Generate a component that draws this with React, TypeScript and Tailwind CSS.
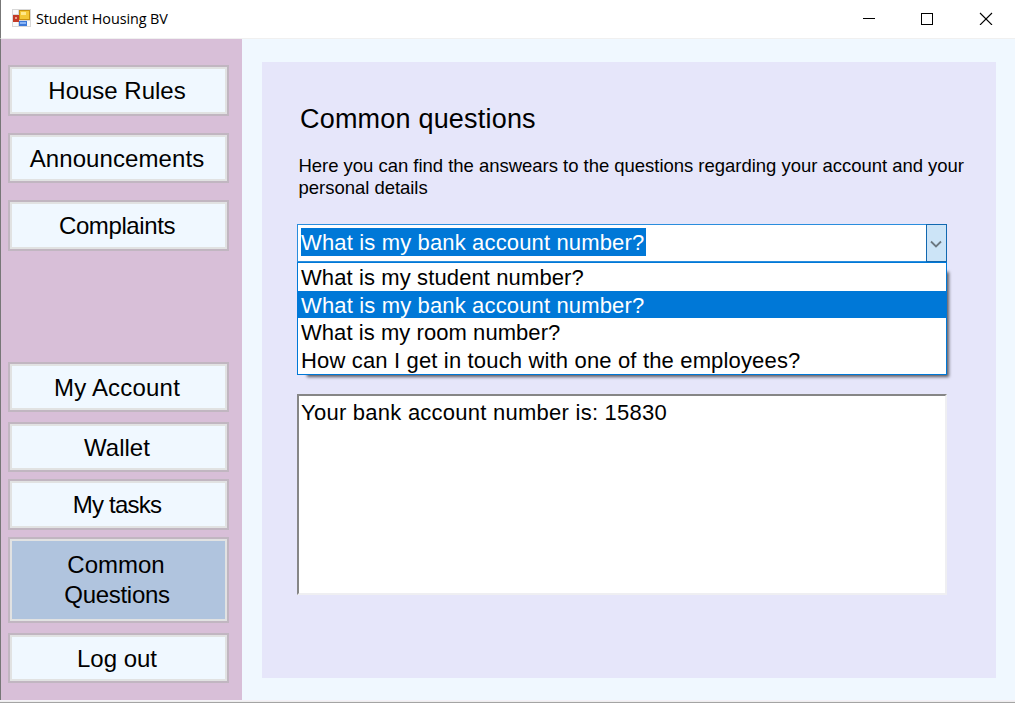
import React from 'react';

function NavButton({ label, place, active = false }: { label: React.ReactNode; place: string; active?: boolean }) {
  return (
    <button className={`w-[221px] shrink-0 border-2 border-[#c1b6c1] bg-[#e1e2e2] p-[2px] ${place}`}>
      <span
        className={`flex h-full w-full items-center justify-center pr-[3px] leading-[30px] ${
          active ? 'bg-[#b0c4de]' : 'bg-[#f0f8ff]'
        }`}
      >
        {label}
      </span>
    </button>
  );
}

function FormIcon() {
  return (
    <svg className="ml-[11px] h-[18px] w-[19px]" viewBox="0 0 19 18" fill="none">
      <path d="M0 0h19v18H0z" fill="#d8d8d8" />
      <path d="M1 1h5v4H1zM1 13h5v4H1zM15 12h3v5h-3z" fill="#fafafa" />
      <path d="M1 6h6v7H1z" fill="#c43a26" />
      <path d="M3 8h2v2H3z" fill="#e9a090" />
      <path d="M7 1h11v10H7z" fill="#c8900f" />
      <path d="M8 2h9v8H8z" fill="#f3c736" />
      <path d="M9 3h5v3H9z" fill="#ffe88a" />
      <path d="M7 12h8v5H7z" fill="#3c78d8" />
      <path d="M8 13h6v2H8z" fill="#8bb5f5" />
    </svg>
  );
}

const options = [
  { text: 'What is my student number?', spacing: 'tracking-[0.11px]' },
  { text: 'What is my bank account number?', spacing: 'tracking-[0.15px]' },
  { text: 'What is my room number?', spacing: 'tracking-[0.06px]' },
  { text: 'How can I get in touch with one of the employees?', spacing: 'tracking-[0.16px]' },
];

export default function App() {
  return (
    <div className="flex h-[703px] w-[1015px] flex-col overflow-hidden bg-[#f0f8ff] font-['Liberation_Sans',Arial,sans-serif] text-black">
      <header className="flex h-[39px] shrink-0 items-center border-b border-[#f0f0f0] border-l border-l-[#777] bg-white pb-[2px]">
        <FormIcon />
        <span className="ml-[5px] flex-1 pt-px font-['Open_Sans','Noto_Sans',sans-serif] text-[14.4px] tracking-[-0.08px]">
          Student Housing BV
        </span>
        <svg className="mr-[22px] h-[13px] w-[131px]" viewBox="0 0 131 13" fill="none" stroke="#000" shapeRendering="crispEdges">
          <path d="M1 6.500h12" />
          <path d="M59.500 1.500h11v11h-11z" />
          <path d="M118 1l12 12M130 1l-12 12" shapeRendering="auto" strokeWidth="1.100" />
        </svg>
      </header>

      <div className="flex min-h-0 flex-1">
        <nav className="flex w-[242px] shrink-0 flex-col border-l border-[#777] bg-[#d8bfd8] pl-[7px] text-[24px]">
          <NavButton label="House Rules" place="mt-[26px] h-[51px]" />
          <NavButton label="Announcements" place="mt-[17px] h-[50px] tracking-[0.1px] [&>span]:pt-px" />
          <NavButton label="Complaints" place="mt-[17px] h-[51px] tracking-[-0.4px]" />
          <NavButton label="My Account" place="mt-[111px] h-[50px] tracking-[0.2px] [&>span]:pt-px" />
          <NavButton label="Wallet" place="mt-[10px] h-[50px] [&>span]:pt-px" />
          <NavButton label="My tasks" place="mt-[7px] h-[51px] tracking-[-0.75px]" />
          <NavButton
            active
            label={
              <span>
                <span className="-ml-[2px]">Common</span>
                <br />
                <span className="tracking-[-0.3px]">Questions</span>
              </span>
            }
            place="mt-[7px] h-[86px]"
          />
          <NavButton label="Log out" place="mt-[10px] h-[50px] [&>span]:pt-[2px]" />
        </nav>

        <main className="mt-[23px] ml-[20px] h-[616px] w-[734px] bg-[#e6e6fa] pl-[35px]">
          <h1 className="pt-[41px] pl-[3px] text-[27px] leading-[32px] tracking-[0.2px]">Common questions</h1>
          <p className="mt-[20px] pl-[1.500px] text-[18.500px] leading-[22px] tracking-[-0.025px] whitespace-nowrap">
            Here you can find the answears to the questions regarding your account and your
            <br />
            personal details
          </p>

          <div className="relative mt-[25px] w-[650px] text-[22px] tracking-[0.15px] whitespace-nowrap">
            <div className="flex h-[38px] border border-[#2a8ddd] bg-white">
              <div className="flex-1 pt-[3px] pl-[3px]">
                <span className="block h-[28px] w-[345px] bg-[#0078d7] leading-[30px] text-white">
                  What is my bank account number?
                </span>
              </div>
              <div className="-my-px -mr-px flex w-[21px] items-center justify-center border border-[#1168b0] bg-[#cce4f7] pr-[2px] pt-px">
                <svg className="h-[8px] w-[12px]" viewBox="0 0 12 8" fill="none" stroke="#6b7780" strokeWidth="1.800">
                  <path d="M1 1.500l5 5 5-5" />
                </svg>
              </div>
            </div>
            <div className="absolute top-[46px] left-[8px] h-[105px] w-[642px] shadow-[2px_2px_3px_rgba(0,0,0,0.6)]" />
            <ul className="absolute top-[38px] left-0 h-[113px] w-[650px] border border-[#0078d7] bg-white">
              {options.map(({ text, spacing }, i) => (
                <li
                  key={text}
                  className={`pl-[3px] leading-[30px] ${spacing} ${i % 2 === 0 ? 'h-[28px]' : 'h-[27px]'} ${
                    i === 1 ? 'bg-[#0078d7] text-white' : ''
                  }`}
                >
                  {text}
                </li>
              ))}
            </ul>
          </div>

          <div className="mt-[132px] h-[201px] w-[650px] border-t-2 border-r-2 border-b-2 border-l-2 border-t-[#868686] border-r-[#efeff2] border-b-[#efeff2] border-l-[#868686] bg-white pl-[2px] text-[22px] leading-[34px] tracking-[0.25px]">
            Your bank account number is: 15830
          </div>
        </main>
      </div>
      <div className="h-[3px] shrink-0 border-t border-b border-t-[#f4f1f7] border-b-[#a4a4a4] bg-[#eeeeee]" />
    </div>
  );
}
